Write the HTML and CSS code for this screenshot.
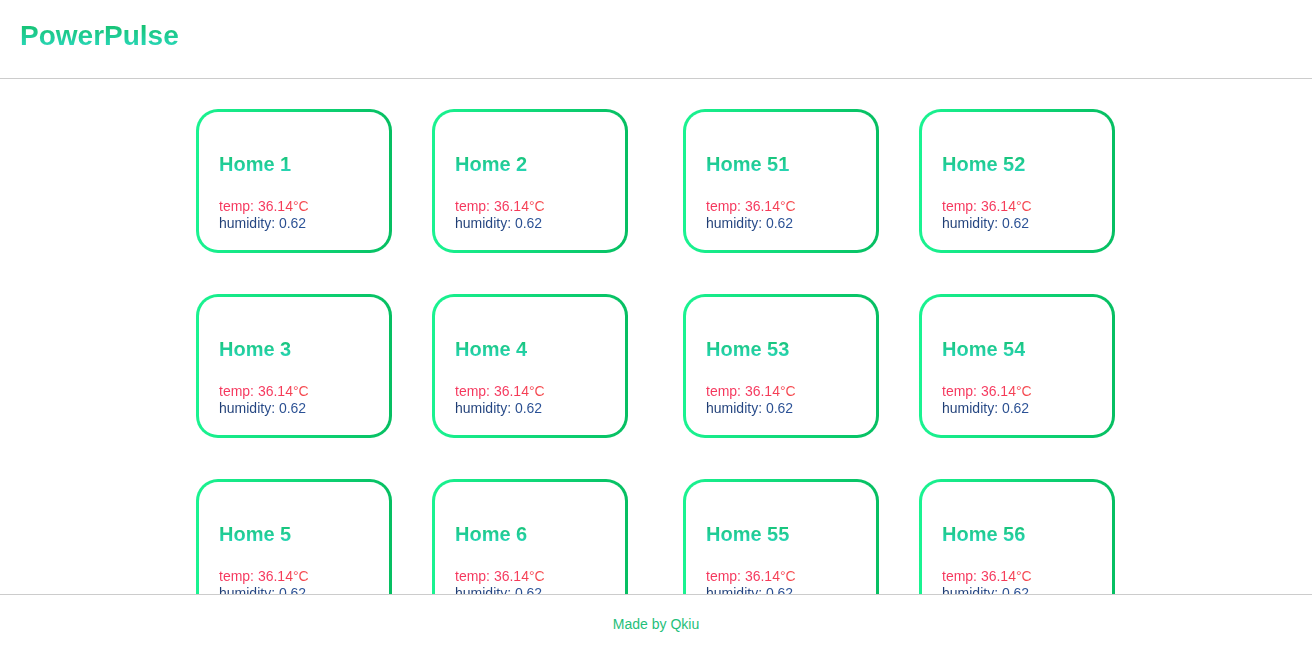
FILE: index.html
```html
<!DOCTYPE html>
<html lang="en">
<head>
<meta charset="utf-8">
<title>PowerPulse</title>
<link rel="stylesheet" href="styles.css">
</head>
<body>
<div class="app">
  <header class="header">
    <h1 class="brand">PowerPulse</h1>
  </header>
  <main class="main">
    <section class="group">
      <div class="card"><h2 class="card-title">Home 1</h2><p class="temp">temp: 36.14°C</p><p class="hum">humidity: 0.62</p></div>
      <div class="card"><h2 class="card-title">Home 2</h2><p class="temp">temp: 36.14°C</p><p class="hum">humidity: 0.62</p></div>
      <div class="card"><h2 class="card-title">Home 3</h2><p class="temp">temp: 36.14°C</p><p class="hum">humidity: 0.62</p></div>
      <div class="card"><h2 class="card-title">Home 4</h2><p class="temp">temp: 36.14°C</p><p class="hum">humidity: 0.62</p></div>
      <div class="card"><h2 class="card-title">Home 5</h2><p class="temp">temp: 36.14°C</p><p class="hum">humidity: 0.62</p></div>
      <div class="card"><h2 class="card-title">Home 6</h2><p class="temp">temp: 36.14°C</p><p class="hum">humidity: 0.62</p></div>
    </section>
    <section class="group">
      <div class="card"><h2 class="card-title">Home 51</h2><p class="temp">temp: 36.14°C</p><p class="hum">humidity: 0.62</p></div>
      <div class="card"><h2 class="card-title">Home 52</h2><p class="temp">temp: 36.14°C</p><p class="hum">humidity: 0.62</p></div>
      <div class="card"><h2 class="card-title">Home 53</h2><p class="temp">temp: 36.14°C</p><p class="hum">humidity: 0.62</p></div>
      <div class="card"><h2 class="card-title">Home 54</h2><p class="temp">temp: 36.14°C</p><p class="hum">humidity: 0.62</p></div>
      <div class="card"><h2 class="card-title">Home 55</h2><p class="temp">temp: 36.14°C</p><p class="hum">humidity: 0.62</p></div>
      <div class="card"><h2 class="card-title">Home 56</h2><p class="temp">temp: 36.14°C</p><p class="hum">humidity: 0.62</p></div>
    </section>
  </main>
  <footer class="footer">Made by Qkiu</footer>
</div>
</body>
</html>
```
FILE: styles.css
```css
html, body {
  margin: 0;
  padding: 0;
  height: 100%;
  background: #fff;
  font-family: "Liberation Sans", Arial, sans-serif;
}

.app {
  height: 100vh;
  display: flex;
  flex-direction: column;
}

.header {
  flex: 0 0 auto;
  height: 79px;
  box-sizing: border-box;
  padding: 20px 20px 0;
  border-bottom: 1px solid #cccccc;
}

.brand {
  margin: 0;
  font-size: 28px;
  line-height: 32px;
  font-weight: 700;
  display: inline-block;
  background: linear-gradient(180deg, #12bd62 0%, #2ddcc9 100%);
  -webkit-background-clip: text;
  background-clip: text;
  color: transparent;
}

.main {
  flex: 1 1 auto;
  min-height: 0;
  overflow: hidden;
  display: flex;
  justify-content: center;
  align-items: flex-start;
  gap: 55px;
  padding-top: 30px;
  padding-right: 1px;
}

.group {
  display: grid;
  grid-template-columns: 196px 196px;
  column-gap: 40px;
  row-gap: 41px;
}

.card {
  box-sizing: border-box;
  height: 144px;
  padding: 20px;
  border: 3px solid transparent;
  border-radius: 22px;
  background:
    linear-gradient(#fff, #fff) padding-box,
    linear-gradient(90deg, #1af391 0%, #06bf62 100%) border-box;
}

.card-title {
  margin: 21px 0 22px;
  font-size: 20px;
  line-height: 23px;
  font-weight: 700;
  display: inline-block;
  background: linear-gradient(180deg, #14c06c 0%, #2ddac6 100%);
  -webkit-background-clip: text;
  background-clip: text;
  color: transparent;
}

.temp, .hum {
  margin: 0;
  font-size: 14px;
  line-height: 17px;
  width: fit-content;
  -webkit-background-clip: text;
  background-clip: text;
  color: transparent;
}

.temp {
  background-image: linear-gradient(90deg, #f5365c 0%, #f5365c 60%, #f54b4b 100%);
  -webkit-background-clip: text;
  background-clip: text;
}

.hum {
  background-image: linear-gradient(90deg, #1e3c72 0%, #2a5298 100%);
  -webkit-background-clip: text;
  background-clip: text;
}

.footer {
  flex: 0 0 61px;
  box-sizing: border-box;
  border-top: 1px solid #cccccc;
  padding-bottom: 2px;
  display: flex;
  align-items: center;
  justify-content: center;
  font-size: 14px;
  color: #1fc07a;
}
```
